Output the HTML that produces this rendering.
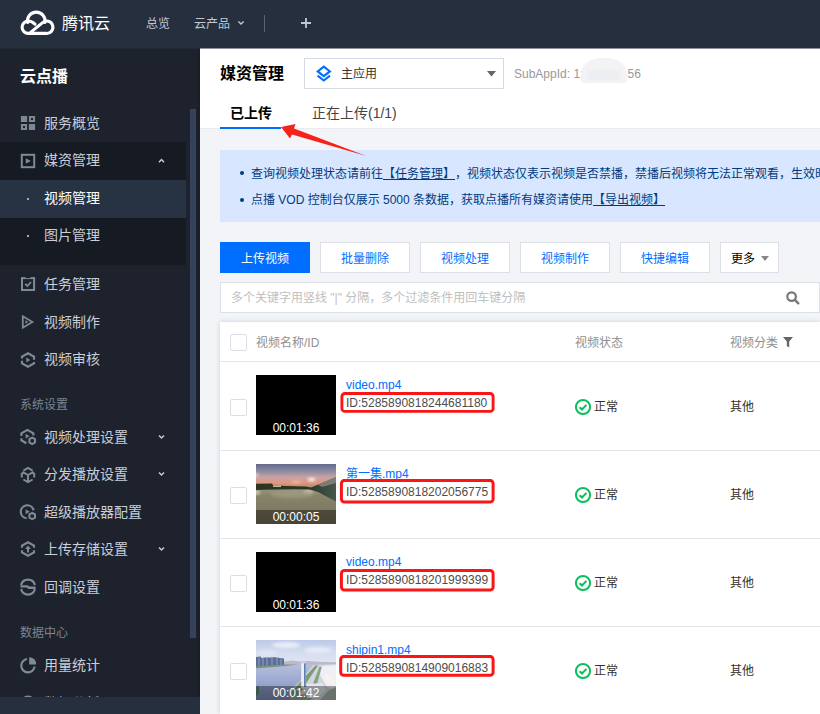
<!DOCTYPE html>
<html lang="zh-CN">
<head>
<meta charset="utf-8">
<title>媒资管理 - 云点播</title>
<style>
*{box-sizing:border-box;margin:0;padding:0}
html,body{width:820px;height:714px;overflow:hidden;background:#f2f4f8}
body{position:relative;text-spacing-trim:space-all;font-family:"Liberation Sans","Noto Sans CJK SC",sans-serif;font-size:12px;color:#333;-webkit-font-smoothing:antialiased}
.abs{position:absolute}
.t{position:absolute;white-space:nowrap;line-height:1}
/* header */
#hdr{position:absolute;left:0;top:0;width:820px;height:48px;background:#262f3e}
#hdr .t{color:#c2c8d3;font-size:12px}
/* sidebar */
#side{position:absolute;left:0;top:48px;width:200px;height:666px;background:#1e222d;overflow:hidden}
#side .mi{position:absolute;left:44px;font-size:14px;color:#c9ced8;line-height:20px;white-space:nowrap}
#side .gl{position:absolute;left:20px;font-size:12px;color:#7b8594;line-height:16px;white-space:nowrap}
#side svg{position:absolute}
/* content */
#main{position:absolute;left:200px;top:48px;width:620px;height:666px;overflow:hidden;background:#f2f4f8}
.btn{position:absolute;top:194px;height:31px;width:90px;border:1px solid #dcdfe6;background:#fff;color:#006eff;font-size:12px;text-align:center;line-height:33px;white-space:nowrap}
.btn.p{background:#006eff;border-color:#006eff;color:#fff}
.row{position:absolute;left:20px;width:600px;background:#fff;border-top:1px solid #e1e5ec}
.cb{position:absolute;left:10px;width:17px;height:17px;border:1px solid #d9dee7;background:#fff;border-radius:2px}
.th{position:absolute;left:36px;width:80px;height:60px;background:#000;overflow:hidden}
.dur{position:absolute;left:0;bottom:-1px;width:80px;height:15px;color:#fff;font-size:12px;text-align:center;line-height:15px}
.nm{position:absolute;left:126px;color:#006eff;font-size:12px;line-height:14px;white-space:nowrap}
.id{position:absolute;left:126px;color:#4d4d4d;font-size:12px;line-height:14px;white-space:nowrap}
.red{position:absolute;left:120px;width:154px;height:21px;border:2px solid #f81616;border-radius:4px}
.st{position:absolute;left:374px;color:#333;font-size:12px;line-height:16px;white-space:nowrap}
.cat{position:absolute;left:510px;color:#333;font-size:12px;line-height:16px;white-space:nowrap}
</style>
</head>
<body>
<div id="hdr">
  <svg class="abs" style="left:0;top:0" width="60" height="48" viewBox="0 0 60 48" fill="none" stroke="#fff" stroke-width="3.1" stroke-linecap="round" stroke-linejoin="round">
    <path d="M30.3 32.6 L42.6 22.6 A6.2 6.2 0 1 1 46 33.4 H28.3 A6.2 6.2 0 0 1 28.3 21 C31 21 33 22.2 35 24.2"/>
    <path d="M27.6 22.5 A8.8 8.8 0 1 1 44.9 22.5"/>
  </svg>
  <span class="t" style="left:62px;top:16px;font-size:16px;color:#fff">腾讯云</span>
  <span class="t" style="left:146px;top:18px">总览</span>
  <span class="t" style="left:194px;top:18px">云产品</span>
  <svg class="abs" style="left:237px;top:20px" width="8" height="6" viewBox="0 0 8 6" fill="none" stroke="#c2c8d3" stroke-width="1.4"><path d="M1.4 1.5 L4 4.1 L6.6 1.5"/></svg>
  <div class="abs" style="left:264px;top:15px;width:1px;height:17px;background:#5a6270"></div>
  <svg class="abs" style="left:301px;top:18px" width="10" height="10" viewBox="0 0 10 10" stroke="#c2c8d3" stroke-width="1.8"><path d="M5 0V10M0 5H10"/></svg>
</div>

<div class="abs" style="left:0;top:48px;width:200px;height:1px;background:#232a37;z-index:20"></div><div class="abs" style="left:200px;top:48px;width:620px;height:1px;background:#8b909a;z-index:20"></div>
<div id="side">
  <span class="t" style="left:20px;top:21px;font-size:16px;font-weight:bold;color:#fff">云点播</span>
  <div class="abs" style="left:0;top:94px;width:186px;height:123px;background:#161a23"></div>
  <div class="abs" style="left:0;top:132px;width:186px;height:38px;background:#273243"></div>
  <div class="abs" style="left:197px;top:0;width:3px;height:666px;background:#1b1f29"></div>
  <div class="abs" style="left:190px;top:61px;width:6px;height:529px;background:#36425c"></div>
  <div class="abs" style="left:0;top:649px;width:200px;height:17px;background:#262f3e;z-index:5"></div>

  <svg style="left:20px;top:67.2px" width="16" height="16" viewBox="0 0 16 16" fill="none" stroke="#808997" stroke-width="1.9" ><path fill="#7e8794" stroke="none" fill-rule="evenodd" d="M0.9 0.9h6.2v6.2h-6.2z M8.9 8.9h6.2v6.2h-6.2z M8.9 0.9h6.2v6.2h-6.2z M11 3h2v2h-2z M0.9 8.9h6.2v6.2h-6.2z M3 11h2v2h-2z"/></svg>
  <svg style="left:20px;top:105.0px" width="16" height="16" viewBox="0 0 16 16" fill="none" stroke="#808997" stroke-width="1.9" ><rect x="1.8" y="1.8" width="12.4" height="12.4" stroke-width="2"/><path d="M5.8 5.2V10.8L10.9 8Z" fill="#7e8794" stroke="none"/></svg>
  <svg style="left:20px;top:228.2px" width="16" height="16" viewBox="0 0 16 16" fill="none" stroke="#808997" stroke-width="1.9" ><rect x="2" y="2.1" width="12.1" height="11.9" stroke-width="2"/><rect x="5.6" y="0.9" width="4.8" height="1.2" fill="#1e222d" stroke="none"/><path d="M5.2 7.8L7.4 10L11 6" stroke-width="1.8"/></svg>
  <svg style="left:20px;top:265.8px" width="16" height="16" viewBox="0 0 16 16" fill="none" stroke="#808997" stroke-width="1.9" ><path d="M2.8 2.3V13.7L12.4 8Z" stroke-width="1.8" stroke-linejoin="miter"/><path d="M5.4 6.2V9.8L8.3 8Z" fill="#7e8794" stroke="none"/></svg>
  <svg style="overflow:visible;left:20px;top:303.5px" width="16" height="16" viewBox="0 0 16 16" fill="none" stroke="#808997" stroke-width="2.15" ><path d="M2 6.6V4.6L8 1.2L14 4.6V7.8M14 10V11.4L8 14.8L2 11.4V8.8"/><path d="M6.3 5.6V10.4L10.4 8Z" fill="#7e8794" stroke="none"/></svg>
  <svg style="overflow:visible;left:20px;top:381.2px" width="16" height="16" viewBox="0 0 16 16" fill="none" stroke="#808997" stroke-width="2.15" ><path d="M1.4 7V4.3L7.4 0.9L13.4 4.3V6.6M1.4 9.2V11.3L6.4 14.2"/><path d="M5.6 4.8V9.6L9.6 7.2Z" fill="#7e8794" stroke="none"/><path d="M12.2 8.6L15 10.2V13.4L12.2 15L9.4 13.4V10.2Z" stroke-width="2"/></svg>
  <svg style="overflow:visible;left:20px;top:419.0px" width="16" height="16" viewBox="0 0 16 16" fill="none" stroke="#808997" stroke-width="2.15" ><path d="M3.4 3.6L8 1L12.6 3.6M14.2 5.8V10.4M1.8 5.8V10.4M3.4 12.5L8 15.1L12.6 12.5M8 14.8V8M8 8L2.4 4.8M8 8L13.6 4.8" stroke-width="2"/></svg>
  <svg style="overflow:visible;left:20px;top:456.3px" width="16" height="16" viewBox="0 0 16 16" fill="none" stroke="#808997" stroke-width="2.15" ><path d="M6.6 14.3A6.5 6.5 0 1 1 13.2 5.2" /><circle cx="13.2" cy="5.2" r="1.2" fill="#7e8794" stroke="none"/><path d="M5.6 5.3V10.3L9.8 7.8Z" fill="#7e8794" stroke="none"/><path d="M12.2 8.8L15 10.4V13.6L12.2 15.2L9.4 13.6V10.4Z" stroke-width="2"/></svg>
  <svg style="overflow:visible;left:20px;top:493.4px" width="16" height="16" viewBox="0 0 16 16" fill="none" stroke="#808997" stroke-width="2.15" ><path d="M2 6.8V4.6L8 1.2L14 4.6V6.8M14 9.2V11.4L8 14.8L2 11.4V9.2"/><path d="M8 4.4L11 8H9V11.4H7V8H5Z" fill="#7e8794" stroke="none"/></svg>
  <svg style="overflow:visible;left:20px;top:531.2px" width="16" height="16" viewBox="0 0 16 16" fill="none" stroke="#808997" stroke-width="2.15" ><path d="M1.1 6.1A7.1 7.1 0 0 1 14.9 6.1M14.9 10.1A7.1 7.1 0 0 1 1.1 10.1" stroke-width="2.2"/><path d="M0.4 7.4H7.2L9.2 8.8H15.6" stroke-width="2.4"/></svg>
  <svg style="overflow:visible;left:20px;top:609.0px" width="16" height="16" viewBox="0 0 16 16" fill="none" stroke="#808997" stroke-width="2.15" ><path d="M7 2A6.7 6.7 0 1 0 14.6 9.6" stroke-width="2.2"/><path d="M9.2 0.2A7 7 0 0 1 16.2 7.4H9.2Z" fill="#808997" stroke="none"/></svg>
  <svg style="left:20px;top:646.6px" width="16" height="16" viewBox="0 0 16 16" fill="none" stroke="#808997" stroke-width="1.9" ><circle cx="8" cy="8" r="6.5" stroke-width="1.8"/></svg>
  <svg style="left:158px;top:109.5px" width="7" height="6" viewBox="0 0 7 6" fill="none" stroke="#c9ced8" stroke-width="1.4"><path d="M1 4.2L3.5 1.6L6 4.2"/></svg>
  <svg style="left:158px;top:385.5px" width="7" height="6" viewBox="0 0 7 6" fill="none" stroke="#c9ced8" stroke-width="1.4"><path d="M1 1.4L3.5 4L6 1.4"/></svg>
  <svg style="left:158px;top:423.0px" width="7" height="6" viewBox="0 0 7 6" fill="none" stroke="#c9ced8" stroke-width="1.4"><path d="M1 1.4L3.5 4L6 1.4"/></svg>
  <svg style="left:158px;top:498.0px" width="7" height="6" viewBox="0 0 7 6" fill="none" stroke="#c9ced8" stroke-width="1.4"><path d="M1 1.4L3.5 4L6 1.4"/></svg>
  <div class="abs" style="left:26.5px;top:150px;width:2px;height:2px;background:#a3a9b5"></div>
  <div class="abs" style="left:26.5px;top:187px;width:2px;height:2px;background:#a3a9b5"></div>
  <span class="mi" style="top:65px">服务概览</span>
  <span class="mi" style="top:102px">媒资管理</span>
  <span class="mi" style="top:140px;color:#fff">视频管理</span>
  <span class="mi" style="top:177px">图片管理</span>
  <span class="mi" style="top:226px">任务管理</span>
  <span class="mi" style="top:264px">视频制作</span>
  <span class="mi" style="top:301px">视频审核</span>
  <span class="gl" style="top:349px">系统设置</span>
  <span class="mi" style="top:379px">视频处理设置</span>
  <span class="mi" style="top:416px">分发播放设置</span>
  <span class="mi" style="top:454px">超级播放器配置</span>
  <span class="mi" style="top:491px">上传存储设置</span>
  <span class="mi" style="top:529px">回调设置</span>
  <span class="gl" style="top:577px">数据中心</span>
  <span class="mi" style="top:607px">用量统计</span>
  <span class="mi" style="top:645px">数据分析</span>
</div>

<div id="main">
  <div class="abs" style="left:0;top:0;width:620px;height:81px;background:#fff;border-bottom:1px solid #e9ebf0"></div>
  <span class="t" style="left:20px;top:18px;font-size:16px;font-weight:bold;color:#000">媒资管理</span>
  <div class="abs" style="left:104px;top:10px;width:200px;height:31px;border:1px solid #d6dae2;background:#fff"></div>
  <svg class="abs" style="left:115.5px;top:17px" width="17" height="18" viewBox="0 0 17 18" fill="none" stroke="#006eff" stroke-width="2.1" stroke-linejoin="miter"><path d="M7.8 1.7 L13.9 6.4 L7.8 11.1 L1.7 6.4 Z"/><path d="M1.6 10.7 L7.8 15.5 L14 10.7"/></svg>
  <span class="t" style="left:141px;top:20px;font-size:12px;color:#333">主应用</span>
  <svg class="abs" style="left:287px;top:23px" width="9" height="6" viewBox="0 0 9 6"><path d="M0 0H9L4.5 5.5Z" fill="#666"/></svg>
  <span class="t" style="left:314px;top:20px;font-size:12px;color:#999">SubAppId: 1:</span>
  <div class="abs" style="left:381px;top:10px;width:46px;height:25px;background:#f3f3f5;border-radius:20px 20px 4px 4px / 16px 16px 4px 4px;filter:blur(0.6px)"></div><div class="abs" style="left:388px;top:22px;width:32px;height:10px;background:#eceef2;filter:blur(0.8px)"></div>
  <span class="t" style="left:427.5px;top:20px;font-size:12px;color:#999">56</span>

  <span class="t" style="left:30px;top:58px;font-size:14px;font-weight:bold;color:#000">已上传</span>
  <span class="t" style="left:112px;top:58px;font-size:14px;color:#444">正在上传(1/1)</span>
  <div class="abs" style="left:20px;top:79px;width:61px;height:2px;background:#006eff"></div>

  <div class="abs" style="left:20px;top:102px;width:620px;height:72px;background:#d8e7ff"></div>
  <div class="abs" style="left:40px;top:123px;width:4px;height:4px;border-radius:50%;background:#003b80"></div>
  <span class="t" style="left:51px;top:120px;color:#003b80;font-size:12px">查询视频处理状态请前往<u>【任务管理】</u>，视频状态仅表示视频是否禁播，禁播后视频将无法正常观看，生效时间</span>
  <div class="abs" style="left:40px;top:149.5px;width:4px;height:4px;border-radius:50%;background:#003b80"></div>
  <span class="t" style="left:51px;top:146px;color:#003b80;font-size:12px">点播 VOD 控制台仅展示 5000 条数据，获取点播所有媒资请使用<u>【导出视频】</u></span>

  <div class="btn p" style="left:20px">上传视频</div>
  <div class="btn" style="left:120px">批量删除</div>
  <div class="btn" style="left:220px">视频处理</div>
  <div class="btn" style="left:320px">视频制作</div>
  <div class="btn" style="left:420px">快捷编辑</div>
  <div class="btn" style="left:520px;width:59px;color:#000;text-align:left;padding-left:10px">更多</div>
  <svg class="abs" style="left:561px;top:208px" width="8" height="5" viewBox="0 0 8 5"><path d="M0 0H8L4 5Z" fill="#888"/></svg>

  <div class="abs" style="left:20px;top:234px;width:600px;height:31px;border:1px solid #dcdfe6;background:#fff"></div>
  <span class="t" style="left:31px;top:244px;color:#c0c0c0;font-size:12px">多个关键字用竖线 "|" 分隔，多个过滤条件用回车键分隔</span>
  <svg class="abs" style="left:585px;top:242px" width="16" height="16" viewBox="0 0 16 16" fill="none" stroke="#777" stroke-width="2"><circle cx="6.6" cy="6.6" r="4.3" stroke-width="2.2"/><path d="M9.9 9.9 L13.3 13.3" stroke-width="2.4" stroke-linecap="round"/></svg>

  <!-- table -->
  <div class="abs" style="left:20px;top:274px;width:600px;height:392px;background:#fff;box-shadow:0 0 5px rgba(54,58,80,.2)"></div>
  <div class="cb" style="left:30px;top:286px"></div>
  <span class="t" style="left:56px;top:289px;color:#909090">视频名称/ID</span>
  <span class="t" style="left:375px;top:289px;color:#909090">视频状态</span>
  <span class="t" style="left:530px;top:289px;color:#909090">视频分类</span>
  <svg class="abs" style="left:583px;top:289px" width="10" height="11" viewBox="0 0 10 11"><path d="M0 0H10L6.2 4.6V10.5L3.8 9V4.6Z" fill="#666"/></svg>

  <div class="row" style="top:313px;height:89px">
    <div class="cb" style="top:37px"></div>
    <div class="th" style="top:13px"><div class="dur">00:01:36</div></div>
    <span class="nm" style="top:16px">video.mp4</span>
    <span class="id" style="top:34px">ID:5285890818244681180</span>
    <svg class="abs" style="left:118px;top:28px" width="160" height="26" viewBox="0 0 160 26" fill="none"><rect x="3.9" y="3.5" width="151.2" height="17.9" rx="3" stroke="#fa1616" stroke-width="2.9"/></svg>
    <svg class="abs" style="overflow:visible;left:355px;top:36.5px" width="16" height="16" viewBox="0 0 16 16" fill="none" stroke="#0abf5b"><circle cx="8" cy="8" r="7.1" stroke-width="2"/><path d="M4.6 8.2L7 10.5L11.4 5.9" stroke-width="2"/></svg><span class="st" style="top:37px">正常</span>
    <span class="cat" style="top:37px">其他</span>
  </div>
  <div class="row" style="top:402px;height:89px">
    <div class="cb" style="top:36px"></div>
    <div class="th" style="top:13px"><svg class="abs" style="left:0;top:0" width="80" height="60" viewBox="0 0 80 60">
<defs>
<linearGradient id="sk2" x1="0" y1="0" x2="0" y2="1"><stop offset="0" stop-color="#636a8b"/><stop offset="0.3" stop-color="#8d8aa2"/><stop offset="0.55" stop-color="#c8a2a4"/><stop offset="0.78" stop-color="#df9781"/><stop offset="1" stop-color="#cf7a5d"/></linearGradient>
<linearGradient id="gd2" x1="0" y1="0" x2="0" y2="1"><stop offset="0" stop-color="#a09b83"/><stop offset="0.25" stop-color="#88836b"/><stop offset="1" stop-color="#746f59"/></linearGradient>
<linearGradient id="fn2" x1="0" y1="0" x2="1" y2="0"><stop offset="0" stop-color="#2d3a2c"/><stop offset="1" stop-color="#46584a"/></linearGradient>
<filter id="b2" x="-20%" y="-20%" width="140%" height="140%"><feGaussianBlur stdDeviation="0.7"/></filter>
<filter id="b2b" x="-50%" y="-50%" width="200%" height="200%"><feGaussianBlur stdDeviation="1.4"/></filter>
</defs>
<rect width="80" height="24" fill="url(#sk2)"/>
<rect y="22" width="80" height="38" fill="url(#gd2)"/>
<g filter="url(#b2b)"><ellipse cx="55.5" cy="15.5" rx="4" ry="1.6" fill="#fff"/><ellipse cx="40" cy="18" rx="5" ry="1.2" fill="#f6c4a8" opacity=".8"/><ellipse cx="0" cy="11" rx="2.5" ry="2" fill="#e8dcdc" opacity=".8"/><ellipse cx="52" cy="27.5" rx="5" ry="2" fill="#d6d0b8" opacity=".9"/><ellipse cx="1" cy="28.5" rx="3" ry="2" fill="#d8d4c0" opacity=".9"/><ellipse cx="36" cy="30" rx="22" ry="4" fill="#a39c84" opacity=".7"/></g>
<g filter="url(#b2)"><path d="M0 19.8 L16 19.6 L17 21.2 L30 22 L50 22.6 L56 23.8 L56 25.4 L40 25.2 L20 25.4 L0 26Z" fill="#2e3524"/><rect x="17" y="21.4" width="8" height="1.6" fill="#b9c09a"/><path d="M54 24 L80 13 L80 37.5 L62 28 L54 25.6Z" fill="url(#fn2)"/><path d="M62 20.5 L80 13 L80 19 L66 23Z" fill="#8d8c84" opacity=".75"/></g>
<rect y="46" width="80" height="14" fill="#000" opacity=".38"/>
</svg><div class="dur">00:00:05</div></div>
    <span class="nm" style="top:16px"><u>第一集.mp4</u></span>
    <span class="id" style="top:34px">ID:5285890818202056775</span>
    <svg class="abs" style="left:118px;top:28px" width="160" height="26" viewBox="0 0 160 26" fill="none"><rect x="3.4" y="1.4" width="151.7" height="21.6" rx="3" stroke="#fa1616" stroke-width="3"/></svg>
    <svg class="abs" style="overflow:visible;left:355px;top:35.5px" width="16" height="16" viewBox="0 0 16 16" fill="none" stroke="#0abf5b"><circle cx="8" cy="8" r="7.1" stroke-width="2"/><path d="M4.6 8.2L7 10.5L11.4 5.9" stroke-width="2"/></svg><span class="st" style="top:36px">正常</span>
    <span class="cat" style="top:36px">其他</span>
  </div>
  <div class="row" style="top:490px;height:89px">
    <div class="cb" style="top:36px"></div>
    <div class="th" style="top:13px"><div class="dur">00:01:36</div></div>
    <span class="nm" style="top:16px">video.mp4</span>
    <span class="id" style="top:34px">ID:5285890818201999399</span>
    <svg class="abs" style="left:118px;top:28px" width="160" height="26" viewBox="0 0 160 26" fill="none"><rect x="3.4" y="3.5" width="151.7" height="19.5" rx="3" stroke="#fa1616" stroke-width="3"/></svg>
    <svg class="abs" style="overflow:visible;left:355px;top:35.5px" width="16" height="16" viewBox="0 0 16 16" fill="none" stroke="#0abf5b"><circle cx="8" cy="8" r="7.1" stroke-width="2"/><path d="M4.6 8.2L7 10.5L11.4 5.9" stroke-width="2"/></svg><span class="st" style="top:36px">正常</span>
    <span class="cat" style="top:36px">其他</span>
  </div>
  <div class="row" style="top:578px;height:89px">
    <div class="cb" style="top:36px"></div>
    <div class="th" style="top:13px"><svg class="abs" style="left:0;top:0" width="80" height="60" viewBox="0 0 80 60">
<defs>
<linearGradient id="sk4" x1="0" y1="0" x2="0" y2="1"><stop offset="0" stop-color="#bccae8"/><stop offset="0.5" stop-color="#d5ddf0"/><stop offset="1" stop-color="#e4e6f0"/></linearGradient>
<linearGradient id="wt4" x1="0" y1="0" x2="0" y2="1"><stop offset="0" stop-color="#b6c0de"/><stop offset="0.5" stop-color="#9aa7cf"/><stop offset="1" stop-color="#7c8ab4"/></linearGradient>
<filter id="b4" x="-20%" y="-20%" width="140%" height="140%"><feGaussianBlur stdDeviation="0.6"/></filter>
<filter id="b4b" x="-50%" y="-50%" width="200%" height="200%"><feGaussianBlur stdDeviation="1.6"/></filter>
</defs>
<rect width="80" height="26" fill="url(#sk4)"/>
<rect y="24" width="80" height="36" fill="url(#wt4)"/>
<g filter="url(#b4b)"><ellipse cx="30" cy="5" rx="14" ry="3" fill="#eef1f8" opacity=".9"/><ellipse cx="62" cy="10" rx="14" ry="3" fill="#eceff7" opacity=".8"/><ellipse cx="10" cy="13" rx="10" ry="2.5" fill="#e3e8f4" opacity=".8"/></g>
<g filter="url(#b4)">
<path d="M0 17 L5 16.6 L5 18 L9 17.4 L14 17.6 L19 17.2 L24 18 L28 18.4 L28 25 L0 27Z" fill="#5d6e96"/>
<path d="M3 17.5V26M7 18V26M11 18V26M16 18V25.6M21 18V25.4M25 18.5V25.2" stroke="#8a98bc" stroke-width="1.2"/>
<path d="M28 21.6 L36 20.6 L44 21.6 L52 21 L62 21.8 L80 22.2 L80 24.6 L28 25Z" fill="#bdb9cb"/>
<path d="M0 26.4 L30 24.6 L42 24.4 L30 26 L0 28.4Z" fill="#7a9576"/>
<path d="M57 25 L80 24 L80 60 L35 60 L34 51 L45 40Z" fill="#cfd6dc"/>
<path d="M59.4 25.6 L62 25.6 L49 45 L43 55 L36 58 L35 52 L47 39Z" fill="#7f9a78"/>
<path d="M66 26 L80 25 L80 50 L71 47 L64 35Z" fill="#eef0f6"/>
<path d="M63.4 27 L65.6 27 L61 44 L57 58 L53.6 60 L51 60 L57 44Z" fill="#86a080"/>
<path d="M70 33 L79 40 L78 47 L68 41Z" fill="#f7f2ef"/>
<path d="M51 44 L66 43 L70 50 L60 58 L50 58Z" fill="#e4e7ee"/>
<path d="M72 51 L80 47 L80 60 L64 60Z" fill="#a3b3a8"/>
<path d="M36 56 L50 54 L52 60 L35 60Z" fill="#8ea297"/>
<rect x="45.2" y="22.4" width="4.6" height="26" fill="#eceef6"/>
<rect x="48" y="23" width="1.7" height="24" fill="#5f80ad"/>
<rect x="45" y="21.4" width="5" height="2" fill="#c9cfdf"/>
<path d="M0 47 L3 46 L3 54 L0 56Z" fill="#5e8a78"/>
</g>
<rect y="46" width="80" height="14" fill="#000" opacity=".36"/>
</svg><div class="dur">00:01:42</div></div>
    <span class="nm" style="top:16px">shipin1.mp4</span>
    <span class="id" style="top:34px">ID:5285890814909016883</span>
    <svg class="abs" style="left:118px;top:28px" width="160" height="26" viewBox="0 0 160 26" fill="none"><rect x="2.7" y="1.4" width="152.4" height="18.9" rx="3" stroke="#fa1616" stroke-width="3"/></svg>
    <svg class="abs" style="overflow:visible;left:355px;top:35.5px" width="16" height="16" viewBox="0 0 16 16" fill="none" stroke="#0abf5b"><circle cx="8" cy="8" r="7.1" stroke-width="2"/><path d="M4.6 8.2L7 10.5L11.4 5.9" stroke-width="2"/></svg><span class="st" style="top:36px">正常</span>
    <span class="cat" style="top:36px">其他</span>
  </div>
</div>

<svg class="abs" style="left:270px;top:115px;z-index:10" width="110" height="50" viewBox="270 115 110 50"><path d="M281 127 L295.5 124 L294 128.5 L366.3 156.1 L292 134.5 L290 138.5 Z" fill="#f5231a"/></svg>
</body>
</html>
